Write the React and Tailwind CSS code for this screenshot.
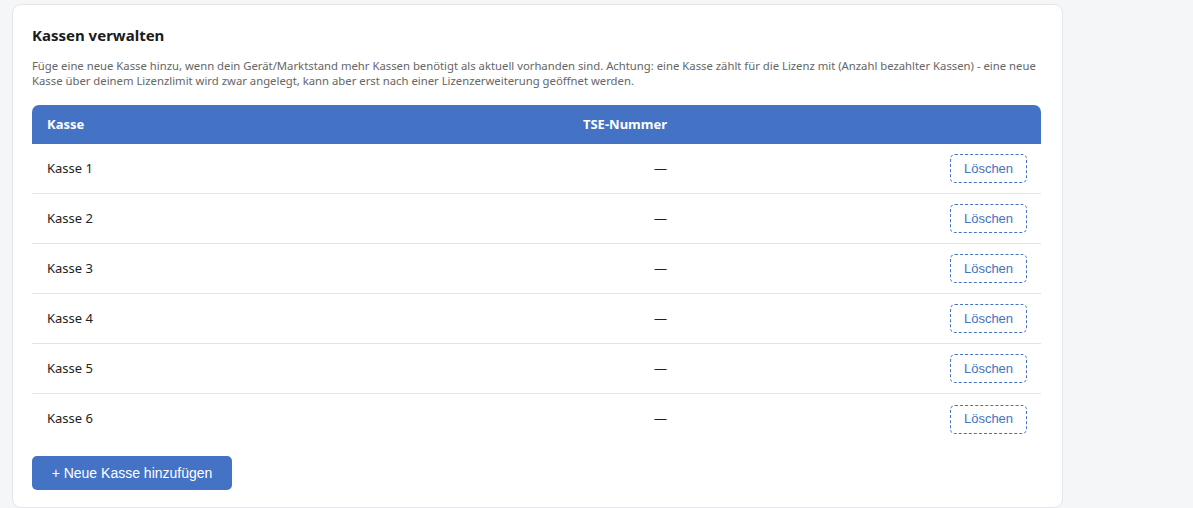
const rows = [1, 2, 3, 4, 5, 6];

export default function App() {
  return (
    <div className="min-h-screen bg-[#f5f6f8] pl-[12px] pt-[4px]" style={{ fontFamily: '"Noto Sans", "Open Sans", sans-serif' }}>
      <div className="w-[1051px] h-[504px] bg-white border border-[#e3e5e9] rounded-[9px] px-[19px] pt-[19px]">
        <h2 className="text-[15px] font-bold text-[#1b1b1b] leading-[22px]">Kassen verwalten</h2>
        <p className="mt-[12px] text-[11.3px] leading-[15px] text-[#666]">
          Füge eine neue Kasse hinzu, wenn dein Gerät/Marktstand mehr Kassen benötigt als aktuell vorhanden sind. Achtung: eine Kasse zählt für die Lizenz mit (Anzahl bezahlter Kassen) - eine neue Kasse über deinem Lizenzlimit wird zwar angelegt, kann aber erst nach einer Lizenzerweiterung geöffnet werden.
        </p>
        <div className="mt-[17px] w-[1009px]">
          <div className="grid grid-cols-[1fr_635px] h-[39px] items-center bg-[#4472c4] rounded-t-[7px] text-white text-[13px] font-bold">
            <div className="pl-[15px]">Kasse</div>
            <div className="flex items-center">
              <div className="w-[261px] text-right">TSE-Nummer</div>
            </div>
          </div>
          {rows.map((n, i) => (
            <div
              key={n}
              className={`grid grid-cols-[1fr_635px] h-[50px] items-center text-[13px] text-[#222] ${i < rows.length - 1 ? "border-b border-[#e4e4e4]" : ""}`}
            >
              <div className="pl-[15px]">Kasse {n}</div>
              <div className="flex items-center">
                <div className="w-[261px] text-right">—</div>
                <div className="flex-1 flex justify-end pr-[14px]">
                  <button
                    className="h-[29px] w-[77px] border border-dashed border-[#4472c4] rounded-[5px] text-[13px] text-[#4472c4]"
                    style={{ fontFamily: '"Liberation Sans", Arial, sans-serif' }}
                  >
                    Löschen
                  </button>
                </div>
              </div>
            </div>
          ))}
        </div>
        <button
          className="mt-[12px] h-[34px] w-[200px] bg-[#4472c4] rounded-[5px] text-white text-[14px]"
          style={{ fontFamily: '"Liberation Sans", Arial, sans-serif' }}
        >
          + Neue Kasse hinzufügen
        </button>
      </div>
    </div>
  );
}
